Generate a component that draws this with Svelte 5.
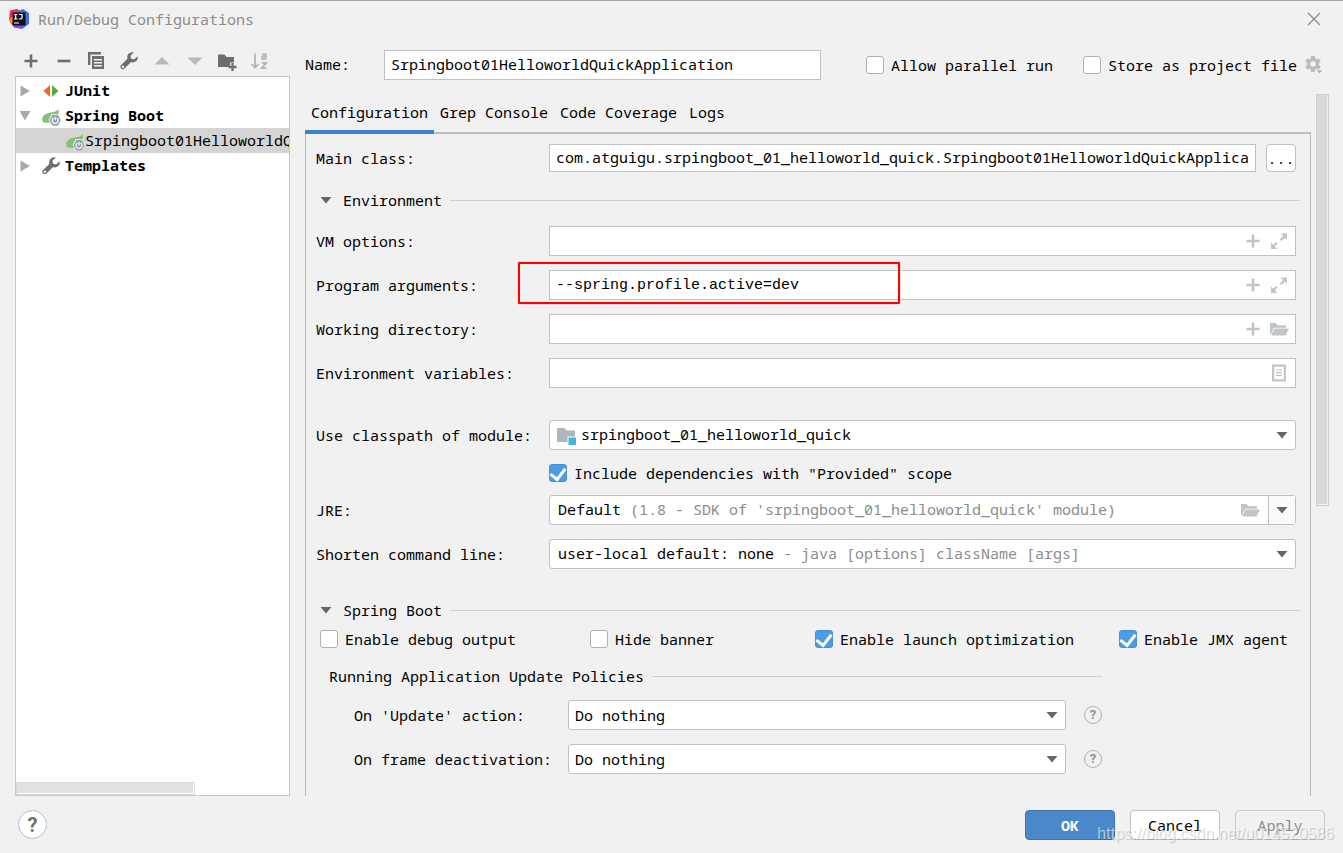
<script lang="ts">
  type Check = { id: string; label: string; on: boolean };

  const tabs = ['Configuration', 'Grep Console', 'Code Coverage', 'Logs'];
  const mainClass = 'com.atguigu.srpingboot_01_helloworld_quick.Srpingboot01HelloworldQuickApplication';

  let tab = $state(0);
  let name = $state('Srpingboot01HelloworldQuickApplication');
  let selected = $state('app');
  let parallel = $state(false);
  let store = $state(false);
  let provided = $state(true);

  let fields = $state([
    { id: 'vm', label: 'VM options:', value: '', icons: ['plus', 'expand'] },
    { id: 'args', label: 'Program arguments:', value: '--spring.profile.active=dev', icons: ['plus', 'expand'] },
    { id: 'dir', label: 'Working directory:', value: '', icons: ['plus', 'folder'] },
    { id: 'env', label: 'Environment variables:', value: '', icons: ['list'] }
  ]);

  let checks: Check[] = $state([
    { id: 'debug', label: 'Enable debug output', on: false },
    { id: 'banner', label: 'Hide banner', on: false },
    { id: 'launch', label: 'Enable launch optimization', on: true },
    { id: 'jmx', label: 'Enable JMX agent', on: true }
  ]);

  const policies = [
    { id: 'update', label: "On 'Update' action:" },
    { id: 'frame', label: 'On frame deactivation:' }
  ];

  const tools = [
    { id: 'plus', title: 'Add' },
    { id: 'minus', title: 'Remove' },
    { id: 'copy', title: 'Copy' },
    { id: 'wrench', title: 'Edit templates' },
    { id: 'up', title: 'Move up' },
    { id: 'down', title: 'Move down' },
    { id: 'newfolder', title: 'Create folder' },
    { id: 'sort', title: 'Sort' }
  ];

  const tree = [
    { id: 'junit', label: 'JUnit', icon: 'junit', arrow: 'right' },
    { id: 'boot', label: 'Spring Boot', icon: 'spring', arrow: 'open' },
    { id: 'app', label: 'Srpingboot01HelloworldQuickApplication', icon: 'spring', arrow: '' },
    { id: 'templates', label: 'Templates', icon: 'wrench', arrow: 'right' }
  ];
</script>

{#snippet icon(id: string)}
  <svg class="icon" viewBox="0 0 20 20" width="20" height="20" aria-hidden="true">
    {#if id === 'plus'}
      <path d="M10 3.500v13M3.500 10h13" fill="none" stroke="currentColor" stroke-width="2.600" />
    {:else if id === 'minus'}
      <path d="M3.500 10h13" stroke="currentColor" stroke-width="2.600" />
    {:else if id === 'copy'}
      <path d="M2 14V1h13v2.400H4.400V14z" fill="currentColor" />
      <path fill-rule="evenodd" d="M6 5h12v13H6zM8 8v1.500h8V8zm0 3v1.500h8V11zm0 3v1.500h8V14z" fill="currentColor" />
    {:else if id === 'wrench'}
      <path d="M18.500 5.200l-3.400 3.300-3-.8-.7-2.900 3.400-3.300c-2.400-.6-5 .4-6.100 2.500-.6 1.300-.6 2.500-.2 3.700L2.100 14.100c-1 1-1 2.500 0 3.500.9.9 2.500.9 3.400 0l6.500-6.500c2.100.7 4.400.1 5.800-1.500 1-1.300 1.200-2.900.7-4.400zM3.900 17a1.200 1.200 0 1 1 0-2.400 1.200 1.200 0 0 1 0 2.400z" fill="currentColor" />
    {:else if id === 'up'}
      <path d="M10 6l7.500 7.500h-15z" fill="#b9b9b9" />
    {:else if id === 'down'}
      <path d="M10 14L2.500 6.500h15z" fill="#b9b9b9" />
    {:else if id === 'newfolder'}
      <path d="M1 3.500h6.500l2 2.500H17v5.500h-4v4.500H1z" fill="currentColor" />
      <path d="M15.500 12v8M11.500 16h8" stroke="currentColor" stroke-width="2.300" />
    {:else if id === 'sort'}
      <g fill="none" stroke="#b5b5b5" stroke-width="1.800">
        <path d="M5 2.500v14M1.500 13L5 16.700 8.500 13" />
        <path d="M12 3.300h3.800v5M15.800 5.500h-2.600c-1.800 0-1.800 2.700 0 2.700h2.600M11.800 11.800h4.400l-4.400 5.400h4.600" />
      </g>
    {:else if id === 'junit'}
      <path d="M9 4v12L2.500 10z" fill="#f26522" />
      <path d="M11 4v12l6.500-6z" fill="#59a83c" />
    {:else if id === 'spring'}
      <path d="M17.500 3c-1.500 2.600-4.500 3-8 3.600C4 7.600.800 10.500 1.200 14c.3 2.200 1.800 2.800 3.600 2.800H10c5.500-1 9-6 7.500-13.800z" fill="#84c273" />
      <path d="M10.500 8h7l3 6-3 6h-7l-3-6z" fill="#e4e9ea" />
      <path d="M11.500 9h5.200l2.900 5.300-2.900 5.300h-5.200l-2.900-5.300z" fill="#94a1ab" />
      <path d="M12.400 12a3 3 0 1 0 3.400 0M14.100 10.800v3.400" fill="none" stroke="#fff" stroke-width="1.200" />
    {:else if id === 'expand'}
      <path d="M11.500 2.500H18V9l-2.200-2.200-3.600 3.300-1.500-1.500 3.400-3.700zM2 11.500l2.300 2.200 2.800-2.800 1.500 1.500-2.700 2.900L8.200 18H2z" fill="currentColor" />
    {:else if id === 'folder'}
      <path d="M1 15V4h5.500l2 2.300H17v2.400H5L2 15z" fill="currentColor" />
      <path d="M5.500 9.500H20L16.500 16.500H2z" fill="currentColor" />
    {:else if id === 'list'}
      <path fill-rule="evenodd" d="M3 1.500h14v17H3zM5.300 3.800v12.400h9.400V3.800z" fill="currentColor" />
      <path d="M7 7h6M7 9.700h6M7 12.400h6" stroke="currentColor" stroke-width="1.200" />
    {:else if id === 'module'}
      <path d="M1 3h7.500l2 2.500H19v6h-7.500V17H1z" fill="#aeb7bd" />
      <path d="M12.500 12.500H20V20h-7.500z" fill="#40b6e0" />
    {:else if id === 'gear'}
      <path fill-rule="evenodd" d="M7.300 1h3.400l.5 2.300 1.600.9 2.200-.7 1.700 2.900-1.700 1.600v2l1.700 1.600-1.700 2.900-2.200-.7-1.600.9-.5 2.300H7.300l-.5-2.300-1.600-.9-2.200.7-1.700-2.900L3 10V8L1.300 6.400 3 3.500l2.200.7 1.600-.9zM9 6.200a2.800 2.800 0 1 0 0 5.600 2.800 2.800 0 0 0 0-5.600z" fill="#b9bbbd" />
      <path d="M12 15h7l-3.500 3.700z" fill="#aeb0b2" stroke="#f1f1f1" stroke-width=".6" />
    {/if}
  </svg>
{/snippet}

{#snippet caret()}
  <svg class="caret" viewBox="0 0 12 8" width="12" height="8" aria-hidden="true"><path d="M.5 1h11L6 7.500z" fill="#666" /></svg>
{/snippet}

<div class="dialog">
  <header class="titlebar">
    <svg viewBox="0 0 20 20" width="20" height="20" aria-hidden="true">
      <path d="M1 1.500L8 0l6 4-4 12-8-1L0 10z" fill="#f4286d" />
      <path d="M0 10.500l4-3 3 8-5.500-1.500z" fill="#fc8a2c" />
      <path d="M9 2l5-2 6 4v11l-7 5-5-3z" fill="#3d6fe8" />
      <path d="M2 14l8 2 3 4-8-1.500z" fill="#9b3ce0" />
      <path d="M3.500 3.500h13v13h-13z" fill="#111" />
      <path d="M5 5.500h3.500M6.700 5.500v4.500M5 10h3.500M10 5.500h3V9c0 1-1.500 1.300-3 .7M5 14h5" fill="none" stroke="#fff" stroke-width="1.200" />
    </svg>
    <h1>Run/Debug Configurations</h1>
    <button type="button" class="close" aria-label="Close">
      <svg viewBox="0 0 14 14" width="14" height="14"><path d="M1 1l12 12M13 1L1 13" stroke="#8c8c8c" stroke-width="1.300" /></svg>
    </button>
  </header>

  <div class="body">
    <aside class="side">
      <div class="toolbar">
        {#each tools as t (t.id)}
          <button type="button" class="tool" title={t.title} aria-label={t.title}>{@render icon(t.id)}</button>
        {/each}
      </div>
      <div class="tree">
        {#each tree as n (n.id)}
          <button type="button" class="node" class:leaf={!n.arrow} class:on={selected === n.id} onclick={() => (selected = n.id)}>
            {#if n.arrow}
              <svg class="twisty" viewBox="0 0 12 12" width="12" height="12" aria-hidden="true">
                <path d={n.arrow === 'open' ? 'M.5 1h11L6 10.500z' : 'M1.500.5v11l9.500-5.500z'} fill="#a9a9a9" />
              </svg>
            {/if}
            {@render icon(n.icon)}
            <span>{n.label}</span>
          </button>
        {/each}
        <div class="hscroll"></div>
      </div>
    </aside>

    <main class="main">
      <div class="namerow">
        <label for="name">Name:</label>
        <input id="name" class="text" bind:value={name} />
        <div class="flags">
          <label class="check"><input type="checkbox" bind:checked={parallel} /><span>Allow parallel run</span></label>
          <label class="check"><input type="checkbox" bind:checked={store} /><span>Store as project file</span></label>
          <button type="button" class="tool" aria-label="Storage settings">{@render icon('gear')}</button>
        </div>
      </div>

      <div class="scroller">
        <div class="content">
          <div class="tabs" role="tablist">
            {#each tabs as t, i (t)}
              <button type="button" role="tab" class="tab" class:on={tab === i} aria-selected={tab === i} onclick={() => (tab = i)}>{t}</button>
            {/each}
          </div>

          <div class="panel">
            <div class="row mainclass">
              <label for="main">Main class:</label>
              <input id="main" class="text" value={mainClass} />
              <button type="button" class="browse" aria-label="Browse">...</button>
            </div>

            <button type="button" class="section env">{@render caret()}<span>Environment</span><i></i></button>

            <div class="fields">
              {#each fields as f (f.id)}
                <div class="row">
                  <label for={f.id}>{f.label}</label>
                  <div class="box">
                    <input id={f.id} class="text" class:code={f.id === 'args'} bind:value={f.value} />
                    <div class="inner">
                      {#each f.icons as ic (ic)}
                        <button type="button" class="mini" aria-label={ic}>{@render icon(ic)}</button>
                      {/each}
                    </div>
                  </div>
                  {#if f.id === 'args'}<div class="mark"></div>{/if}
                </div>
              {/each}
            </div>

            <div class="row">
              <label for="module">Use classpath of module:</label>
              <div class="box">
                <select id="module" class="text module"><option>srpingboot_01_helloworld_quick</option></select>
                <div class="lead">{@render icon('module')}</div>
                <div class="drop">{@render caret()}</div>
              </div>
            </div>
            <label class="check provided"><input type="checkbox" bind:checked={provided} /><span>Include dependencies with "Provided" scope</span></label>
            <div class="fields">
              <div class="row">
                <label for="jre">JRE:</label>
                <div class="box">
                  <select id="jre" class="text combo"><option>Default</option></select>
                  <span class="hint jre">(1.8 - SDK of 'srpingboot_01_helloworld_quick' module)</span>
                  <div class="inner jrefolder"><button type="button" class="mini" aria-label="Choose JRE">{@render icon('folder')}</button></div>
                  <div class="drop split">{@render caret()}</div>
                </div>
              </div>
              <div class="row">
                <label for="shorten">Shorten command line:</label>
                <div class="box">
                  <select id="shorten" class="text combo"><option>user-local default: none</option></select>
                  <span class="hint shorten">- java [options] className [args]</span>
                  <div class="drop">{@render caret()}</div>
                </div>
              </div>
            </div>

            <button type="button" class="section boot">{@render caret()}<span>Spring Boot</span><i></i></button>
            <div class="checks">
              {#each checks as c (c.id)}
                <label class="check"><input type="checkbox" bind:checked={c.on} /><span>{c.label}</span></label>
              {/each}
            </div>

            <div class="policies">
              <h2 class="section"><span>Running Application Update Policies</span><i></i></h2>
              {#each policies as p (p.id)}
                <div class="policy">
                  <label for={p.id}>{p.label}</label>
                  <div class="box">
                    <select id={p.id} class="text"><option>Do nothing</option></select>
                    <div class="drop">{@render caret()}</div>
                  </div>
                  <button type="button" class="q" aria-label="Help for {p.label}">?</button>
                </div>
              {/each}
            </div>
          </div>
        </div>
        <div class="vscroll"><div></div></div>
      </div>
    </main>
  </div>

  <footer class="footer">
    <button type="button" class="help" aria-label="Help">?</button>
    <button type="button" class="btn primary">OK</button>
    <button type="button" class="btn">Cancel</button>
    <button type="button" class="btn" disabled>Apply</button>
    <div class="watermark">https://blog.csdn.net/u014520586</div>
  </footer>
</div>

<style>
  :global(body) { background: #f1f1f1; }
  .dialog { box-sizing: border-box; min-height: 100vh; display: flex; flex-direction: column; border-top: 1px solid #a6a6a6; background: #f1f1f1; color: #000; font: 15px/20px 'Noto Sans Mono', 'DejaVu Sans Mono', monospace; white-space: nowrap; overflow: hidden; }
  .dialog :is(*, *::before) { box-sizing: border-box; }
  button { font: inherit; color: inherit; border: none; background: transparent; padding: 0; margin: 0; }
  svg { display: block; flex: none; }
  h1, h2 { margin: 0; font: inherit; }

  .titlebar { display: flex; align-items: center; gap: 9px; height: 38px; padding: 0 22px 2px 9px; color: #8c8c8c; }
  .close { margin-left: auto; }

  .body { flex: 1; display: grid; grid-template-columns: 275px minmax(0, 1fr); gap: 15px; padding: 7px 14px 0 15px; }
  .side { display: flex; flex-direction: column; min-width: 0; }
  .toolbar { display: flex; justify-content: space-between; align-items: center; height: 30px; padding: 0 20px 0 6px; color: #6e6e6e; }
  .tool { width: 20px; height: 20px; }
  .tree { flex: 1; display: flex; flex-direction: column; border: 1px solid #c8c8c8; background: #fff; padding-top: 1px; overflow: hidden; }
  .node { display: flex; align-items: center; height: 25px; padding-left: 3px; font-weight: bold; text-align: left; }
  .node span { padding-bottom: 2px; }
  .node .icon { margin: 0 4px 0 10px; color: #6e6e6e; }
  .node.leaf { font-weight: normal; padding-left: 39px; }
  .node.leaf .icon { margin-right: 0; }
  .node.on { background: #d4d4d4; }
  .hscroll { width: 179px; height: 13px; margin-top: auto; background: #e1e1e1; border: 1px solid #d8d8d8; box-shadow: inset -1px -1px #fff; }

  .main { display: flex; flex-direction: column; min-width: 0; padding-top: 4px; }
  .namerow { display: flex; align-items: center; height: 30px; padding-right: 5px; }
  .namerow > label { width: 79px; padding-bottom: 2px; }
  .namerow .text { width: 437px; }
  .flags { display: flex; align-items: center; margin-left: auto; }
  .flags .check + .check { margin-left: 30px; }
  .flags .tool { margin-left: 7px; }

  .text { appearance: none; display: block; width: 100%; height: 30px; margin: 0; padding: 0 6px 2px; border: 1px solid #c0c0c0; border-radius: 0; background: #fff; color: #000; font: inherit; outline: none; }
  select.text { border-radius: 3px; }
  .text.code { padding-bottom: 0; font-family: 'Liberation Mono', 'Courier New', monospace; }

  .check { display: flex; align-items: center; gap: 7px; }
  .check input { appearance: none; flex: none; display: grid; place-items: center; width: 18px; height: 18px; margin: 0; border: 1px solid #b0b0b0; border-radius: 3px; background: #fff; }
  .check input:checked { background: #4d9be3; border-color: #4690d6; }
  .check input:checked::before { content: ''; width: 7px; height: 12px; margin-bottom: 3px; border: solid #fff; border-width: 0 3px 3px 0; transform: rotate(38deg); }

  .scroller { flex: 1; display: flex; gap: 5px; margin-top: 14px; }
  .content { flex: 1; min-width: 0; display: flex; flex-direction: column; }
  .tabs { display: flex; height: 40px; border-bottom: 2px solid #bdbdbd; }
  .tab { height: 40px; padding: 0 6px; border-bottom: 4px solid transparent; }
  .tab.on { border-bottom-color: #4083c9; }
  .panel { flex: 1; padding: 10px 10px 22px; border: solid #bdbdbd; border-width: 0 1px; }

  .row { position: relative; display: grid; grid-template-columns: 233px minmax(0, 1fr); align-items: center; padding-right: 4px; }
  .row.mainclass { grid-template-columns: 233px minmax(0, 1fr) 30px; column-gap: 0; }
  .mainclass .text { width: auto; height: 28px; margin-right: 10px; }
  .browse { width: 30px; height: 28px; border: 1px solid #c0c0c0; border-radius: 4px; background: #fff; }
  .fields { display: grid; gap: 14px; }
  .box { display: grid; align-items: center; }
  .box > * { grid-area: 1 / 1; }
  .inner { display: flex; justify-self: end; gap: 6px; padding-right: 7px; color: #bfc5c9; }
  .mini { width: 20px; height: 20px; display: grid; place-items: center; }
  .inner.jrefolder { padding-right: 36px; }
  .lead { padding-left: 7px; pointer-events: none; }
  .drop { justify-self: end; display: grid; place-items: center; width: 28px; height: 28px; pointer-events: none; }
  .drop.split { margin-right: 1px; width: 27px; border-left: 1px solid #c0c0c0; background: #fafafa; }
  .text.module { padding-left: 31px; }
  .text.combo { padding-left: 8px; }
  .hint { padding-bottom: 2px; color: #8c8c8c; pointer-events: none; }
  .hint.jre { padding-left: calc(9px + 8ch); }
  .hint.shorten { padding-left: calc(9px + 25ch); }
  .mark { position: absolute; left: 202px; top: -8px; width: 382px; height: 42px; border: 2px solid #f00; border-radius: 1px; box-shadow: 0 0 1px #f00; pointer-events: none; }

  .section { display: flex; align-items: center; width: 100%; height: 20px; }
  .section i { flex: 1; height: 1px; margin-left: 8px; background: #cfcfcf; }
  .section .caret { margin: 0 11px 0 4px; }
  .env { margin: 18px 0 16px; }
  .fields + .row { margin-top: 32px; }
  .provided { height: 20px; margin: 13px 0 12px 233px; }
  .boot { margin: 31px 0 9px; }
  .checks { display: grid; grid-template-columns: 270fr 225fr 304fr 181fr; height: 20px; padding-left: 4px; }
  .policies { display: grid; gap: 14px; margin: 17px 198px 0 13px; }
  .policy { display: grid; grid-template-columns: 214px minmax(0, 1fr) 18px; align-items: center; padding-left: 25px; }
  .policy .box { margin-right: 18px; }
  .policy .text { padding-bottom: 0; }
  .q { width: 18px; height: 18px; border: 1px solid #aab2b8; border-radius: 50%; color: #8b949a; font: bold 13px/16px Roboto, sans-serif; }

  .vscroll { width: 13px; }
  .vscroll div { height: 412px; background: #d9d9d9; border: 1px solid #cecece; box-shadow: inset -1px -1px #f1f1f1; }

  .footer { position: relative; display: flex; align-items: center; gap: 15px; height: 57px; padding: 0 18px; }
  .help { width: 29px; height: 29px; margin-right: auto; border: 1px solid #bdbdbd; border-radius: 50%; background: #fff; color: #6e6e6e; font: bold 20px/26px Roboto, sans-serif; }
  .btn { width: 90px; height: 30px; border: 1px solid #c0c0c0; border-radius: 4px; background: #fff; }
  .btn.primary { border-color: #3d75b3; background: #4a88c9; color: #fff; font-weight: bold; }
  .btn:disabled { border-color: #cbcbcb; background: transparent; color: #8c8c8c; }
  .watermark { position: absolute; right: 9px; bottom: 9px; color: rgba(255, 255, 255, 0.6); font: 16px/20px 'Liberation Sans', Arial, sans-serif; text-shadow: 1px 1px 1px rgba(0, 0, 0, 0.2); pointer-events: none; }
</style>
